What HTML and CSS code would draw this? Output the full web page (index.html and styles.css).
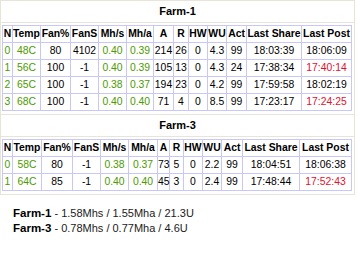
FILE: index.html
```html
<!DOCTYPE html>
<html>
<head>
<meta charset="utf-8">
<link rel="stylesheet" href="styles.css">
</head>
<body>
<div class="farm">
  <div class="title">Farm-1</div>
  <div class="body">
    <table class="grid f1">
      <colgroup><col><col><col><col><col><col><col><col><col><col><col><col><col></colgroup>
      <tr><th>N</th><th>Temp</th><th>Fan%</th><th>FanS</th><th>Mh/s</th><th>Mh/a</th><th>A</th><th>R</th><th>HW</th><th>WU</th><th>Act</th><th>Last Share</th><th>Last Post</th></tr>
      <tr><td class="g">0</td><td class="g">48C</td><td>80</td><td>4102</td><td class="g">0.40</td><td class="g">0.39</td><td>214</td><td>26</td><td>0</td><td>4.3</td><td>99</td><td>18:03:39</td><td>18:06:09</td></tr>
      <tr><td class="g">1</td><td class="g">56C</td><td>100</td><td>-1</td><td class="g">0.40</td><td class="g">0.39</td><td>105</td><td>13</td><td>0</td><td>4.3</td><td>24</td><td>17:38:34</td><td class="r">17:40:14</td></tr>
      <tr><td class="g">2</td><td class="g">65C</td><td>100</td><td>-1</td><td class="g">0.38</td><td class="g">0.37</td><td>194</td><td>23</td><td>0</td><td>4.2</td><td>99</td><td>17:59:58</td><td>18:02:19</td></tr>
      <tr><td class="g">3</td><td class="g">68C</td><td>100</td><td>-1</td><td class="g">0.40</td><td class="g">0.40</td><td>71</td><td>4</td><td>0</td><td>8.5</td><td>99</td><td>17:23:17</td><td class="r">17:24:25</td></tr>
    </table>
  </div>
</div>
<div class="farm next">
  <div class="title">Farm-3</div>
  <div class="body">
    <table class="grid f3">
      <colgroup><col><col><col><col><col><col><col><col><col><col><col><col><col></colgroup>
      <tr><th>N</th><th>Temp</th><th>Fan%</th><th>FanS</th><th>Mh/s</th><th>Mh/a</th><th>A</th><th>R</th><th>HW</th><th>WU</th><th>Act</th><th>Last Share</th><th>Last Post</th></tr>
      <tr><td class="g">0</td><td class="g">58C</td><td>80</td><td>-1</td><td class="g">0.38</td><td class="g">0.37</td><td>73</td><td>5</td><td>0</td><td>2.2</td><td>99</td><td>18:04:51</td><td>18:06:38</td></tr>
      <tr><td class="g">1</td><td class="g">64C</td><td>85</td><td>-1</td><td class="g">0.40</td><td class="g">0.40</td><td>45</td><td>3</td><td>0</td><td>2.4</td><td>99</td><td>17:48:44</td><td class="r">17:52:43</td></tr>
    </table>
  </div>
</div>
<div class="summary">
  <div class="line"><b>Farm-1</b> - 1.58Mhs / 1.55Mha / 21.3U</div>
  <div class="line"><b>Farm-3</b> - 0.78Mhs / 0.77Mha / 4.6U</div>
</div>
</body>
</html>
```
FILE: styles.css
```css
html, body {
  margin: 0;
  padding: 0;
  background: #ffffff;
  font-family: "Liberation Sans", Arial, sans-serif;
  color: #000000;
}
.farm {
  width: 353px;
  border: 1px solid #e8e4d8;
}
.farm.next {
  border-top: none;
}
.title {
  height: 21px;
  line-height: 21px;
  text-align: center;
  font-weight: bold;
  font-size: 11px;
  border-bottom: 1px solid #e8e4d8;
}
.body {
  padding: 2px 2px 3px 1px;
}
.grid {
  width: 350px;
  border-collapse: collapse;
  font-size: 10.4px;
  table-layout: fixed;
}
.grid th, .grid td {
  border: 1px solid #c8c8f6;
  padding: 1px 0;
  line-height: 14px;
  text-align: center;
  white-space: nowrap;
  overflow: visible;
}
.grid th {
  font-weight: bold;
}

/* Farm-1 column widths */
.f1 col:nth-child(1) { width: 10px; }
.f1 col:nth-child(2) { width: 28px; }
.f1 col:nth-child(3) { width: 30px; }
.f1 col:nth-child(4) { width: 28px; }
.f1 col:nth-child(5) { width: 28px; }
.f1 col:nth-child(6) { width: 27px; }
.f1 col:nth-child(7) { width: 20px; }
.f1 col:nth-child(8) { width: 15px; }
.f1 col:nth-child(9) { width: 19px; }
.f1 col:nth-child(10) { width: 19px; }
.f1 col:nth-child(11) { width: 20px; }
.f1 col:nth-child(12) { width: 55px; }
.f1 col:nth-child(13) { width: 50px; }

/* Farm-3 column widths */
.f3 col:nth-child(1) { width: 10px; }
.f3 col:nth-child(2) { width: 29px; }
.f3 col:nth-child(3) { width: 31px; }
.f3 col:nth-child(4) { width: 28px; }
.f3 col:nth-child(5) { width: 28px; }
.f3 col:nth-child(6) { width: 29px; }
.f3 col:nth-child(7) { width: 12px; }
.f3 col:nth-child(8) { width: 14px; }
.f3 col:nth-child(9) { width: 19px; }
.f3 col:nth-child(10) { width: 19px; }
.f3 col:nth-child(11) { width: 21px; }
.f3 col:nth-child(12) { width: 57px; }
.f3 col:nth-child(13) { width: 52px; }

.g {
  color: #4c9a00;
}
.r {
  color: #e0102c;
}
.summary {
  padding: 11px 0 0 13px;
  font-size: 11px;
  line-height: 15px;
  color: #1a1a1a;
}
.summary b {
  color: #000000;
  font-size: 11.5px;
}
```
